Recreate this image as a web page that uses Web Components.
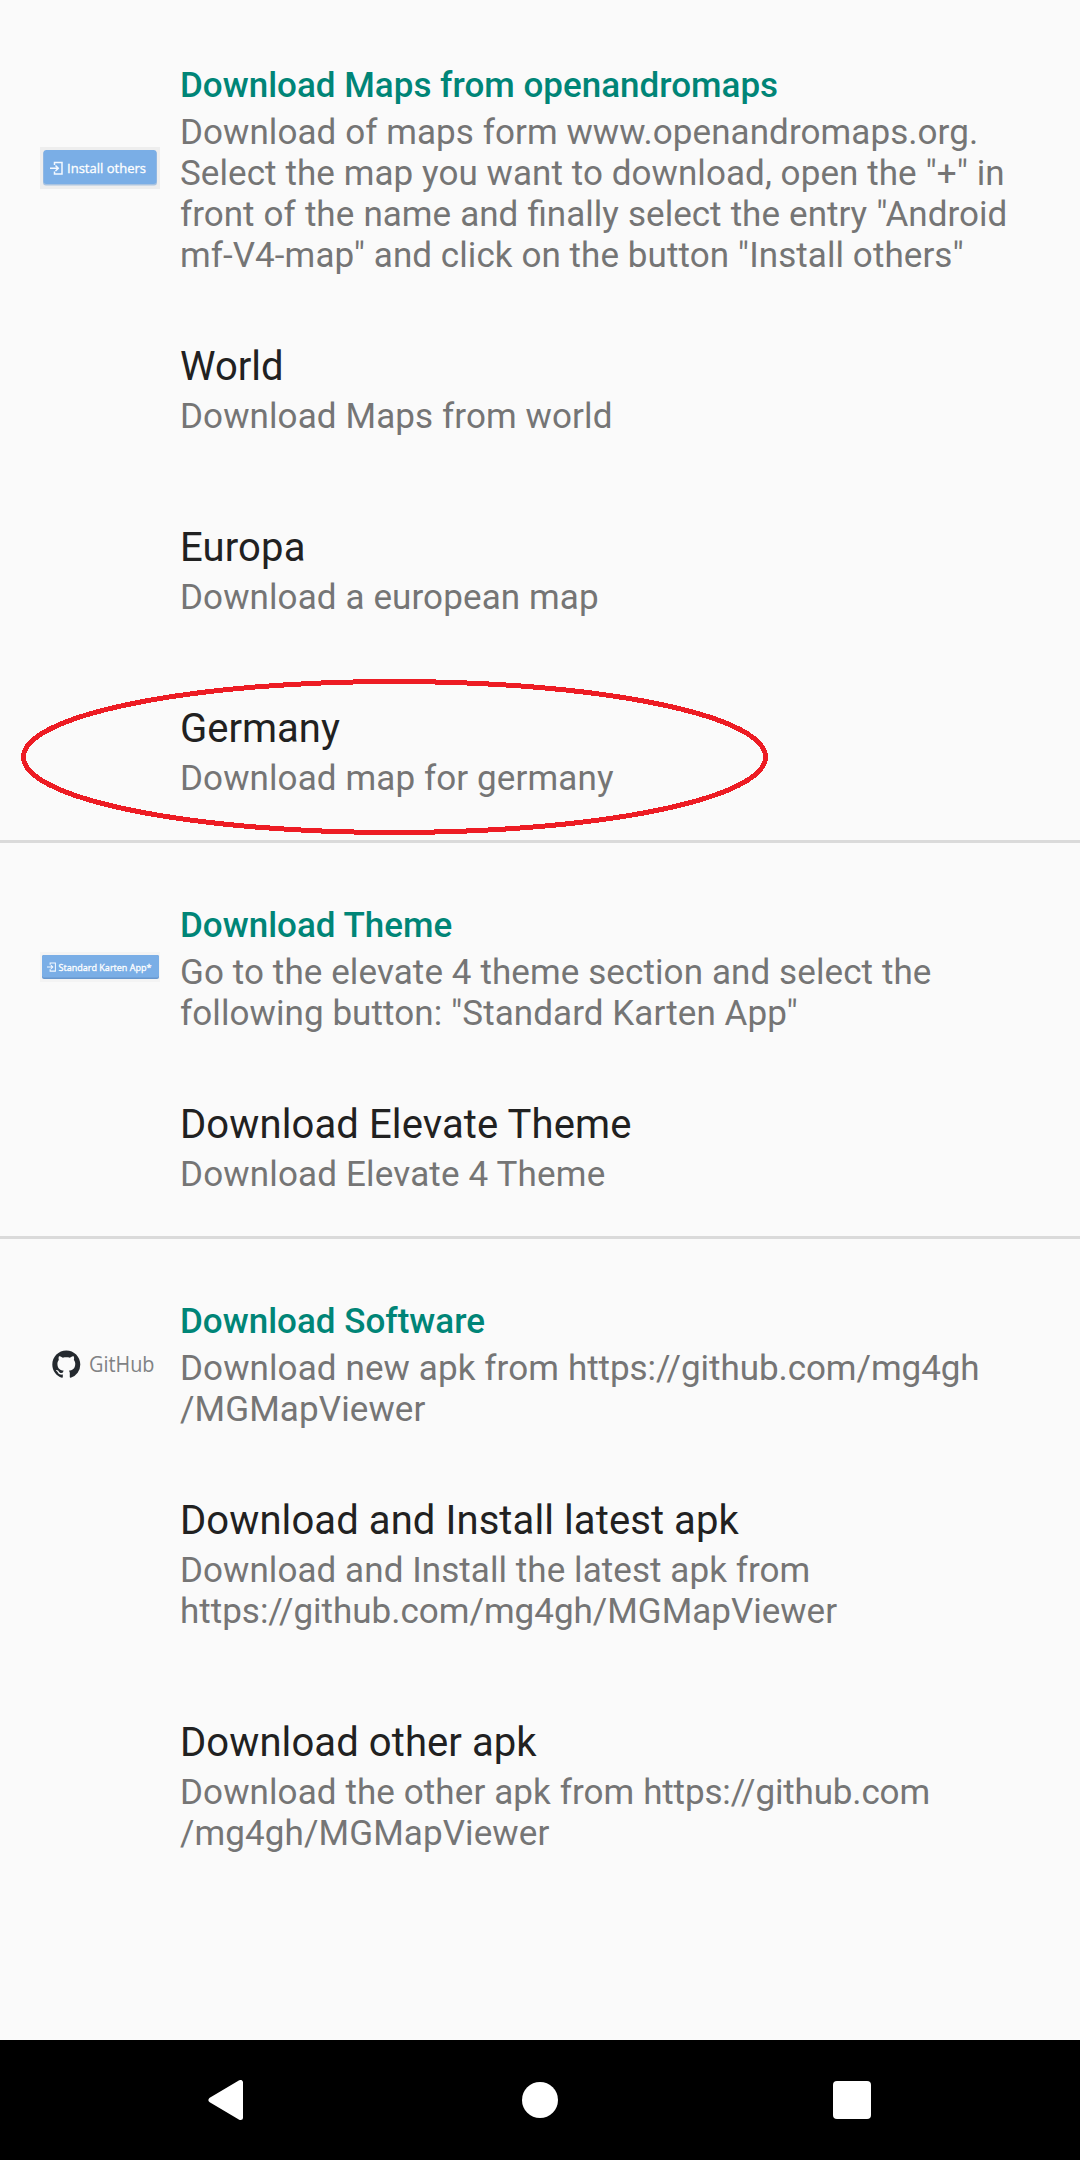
<!DOCTYPE html>
<html lang="en"><head><meta charset="utf-8"><title>Downloads</title>
<style>html,body{margin:0;background:#fafafa}body{font-family:Roboto,sans-serif}</style></head><body>
<download-screen></download-screen>
<script>
const define=(name,html)=>customElements.define(name,class extends HTMLElement{
 constructor(){super();this.attachShadow({mode:'open'}).innerHTML=html}});

define('pref-header',`<style>:host{display:flex;height:var(--h);box-sizing:border-box;padding-top:var(--top,62px)}
.icon{width:140px;flex:none;margin-left:40px;display:flex;flex-direction:column;justify-content:flex-start}
h2{margin:0;font-size:35px;line-height:41px;font-weight:500;color:#008577}
p{margin:6px 0 0;font-size:35px;line-height:41px;color:#757575;white-space:nowrap;letter-spacing:var(--ls,0)}
</style><div class="icon"><slot name="icon"></slot></div><div><h2><slot name="title"></slot></h2><p><slot></slot></p></div>`);

define('pref-item',`<style>:host{display:block;position:relative;height:var(--h,181px);box-sizing:border-box;padding:25px 0 0 180px}
h3{margin:0;font-size:40px;line-height:47px;font-weight:400;color:#212121;letter-spacing:var(--tls,0)}
p{margin:6px 0 0;font-size:35px;line-height:41px;color:#757575;white-space:nowrap;letter-spacing:var(--ls,.11px)}
</style><h3><slot name="title"></slot></h3><p><slot></slot></p><slot name="mark"></slot>`);

define('red-ring',`<style>:host{display:block;position:absolute;left:21px;top:-1px;width:747px;height:156px}svg{display:block}</style>
<svg width="747" height="156" shape-rendering="crispEdges"><ellipse cx="373.5" cy="78" rx="371" ry="75.5" fill="none" stroke="#ed1c24" stroke-width="5"/></svg>`);

define('pref-group',`<style>:host{display:block;box-sizing:border-box}:host([ruled]){border-top:3px solid #dadada}</style><slot></slot>`);

const entry='<path d="M4.500 4V1.500H12V13H4.500V10.500M0 7.250H8M5.500 4.500L8.300 7.250L5.500 10" fill="none" stroke="#f4f9ff" stroke-width="1.5"/>';
define('install-badge',`<style>:host{display:block;width:120px;height:42px;margin-top:82px;background:#eee}svg{display:block}text{font-family:"Open Sans",sans-serif}</style>
<svg width="120" height="42"><rect x="3" y="4" width="114" height="34.500" rx="3" fill="#a9c3e0"/><rect x="3.5" y="3" width="113" height="34" rx="3" fill="#7aaee6"/>
<g transform="translate(10 14)">${entry}</g><text x="27" y="25.700" font-size="13.300" fill="#fff" stroke="#fff" stroke-width=".3" textLength="79" lengthAdjust="spacingAndGlyphs">Install others</text></svg>`);
define('theme-badge',`<style>:host{display:block;width:120px;height:30px;margin-top:47px;background:#f4f4f4}svg{display:block}text{font-family:"Open Sans",sans-serif}</style>
<svg width="120" height="30"><rect x="2" y="3" width="117" height="24" rx="2" fill="#6897cd"/><rect x="2" y="3" width="117" height="22.500" rx="2" fill="#7aaee6"/>
<g transform="translate(7 10) scale(.7)">${entry}</g><text x="18.500" y="18.500" font-size="9.500" fill="#fff" stroke="#fff" stroke-width=".3" textLength="93" lengthAdjust="spacingAndGlyphs">Standard Karten App*</text></svg>`);
define('github-badge',`<style>:host{display:block;width:120px;height:44px;margin-top:39px}svg{display:block}text{font-family:"Open Sans",sans-serif}</style>
<svg width="120" height="44"><g transform="translate(12.300 10.500) scale(1.75)"><path fill="#24292e" d="M8 0C3.580 0 0 3.580 0 8c0 3.540 2.290 6.530 5.470 7.590.4.070.55-.17.55-.38 0-.19-.01-.82-.01-1.490-2.010.37-2.530-.49-2.690-.94-.09-.23-.48-.94-.82-1.130-.28-.15-.68-.52-.01-.53.63-.01 1.080.58 1.230.82.72 1.210 1.870.87 2.330.66.07-.52.28-.87.51-1.070-1.780-.2-3.640-.89-3.640-3.950 0-.87.31-1.590.82-2.150-.08-.2-.36-1.020.08-2.120 0 0 .67-.21 2.200.82.64-.18 1.320-.27 2-.27s1.360.09 2 .27c1.530-1.040 2.200-.82 2.200-.82.44 1.100.16 1.920.08 2.120.51.56.82 1.270.82 2.150 0 3.070-1.870 3.750-3.650 3.950.29.25.54.73.54 1.480 0 1.070-.01 1.930-.01 2.200 0 .21.15.46.55.38A8.010 8.010 0 0 0 16 8c0-4.420-3.580-8-8-8z"/></g>
<text x="49" y="31.600" font-size="21" fill="#808284" textLength="65.500" lengthAdjust="spacingAndGlyphs">GitHub</text></svg>`);

define('nav-bar',`<style>:host{display:flex;justify-content:space-between;align-items:center;height:120px;background:#000;box-sizing:border-box;padding:0 209px 0 208px}svg{display:block}</style>
<svg width="39" height="40"><path d="M3 20L32.500 2.500V37.500Z" fill="#fff" stroke="#fff" stroke-width="5" stroke-linejoin="round"/></svg>
<svg width="36" height="36"><circle cx="18" cy="18" r="18" fill="#fff"/></svg>
<svg width="38" height="38"><rect width="38" height="38" rx="4" fill="#fff"/></svg>`);

define('download-screen',`<style>:host{display:flex;flex-direction:column;width:1080px;height:2160px;background:#fafafa;overflow:hidden}main{flex:1}.lig{letter-spacing:0;word-spacing:.5px}</style>
<main>
<pref-group><pref-header style="--h:318px;--top:65px;--ls:.075px"><install-badge slot="icon"></install-badge><span slot="title">Download Maps from openandromaps</span>Download of maps form www.openandromaps.org.<br>Select the map you want to download, open the "+" in<br><span class="lig">front of the name and finally select the entry "Android</span><br>mf-V4-map" and click on the button "Install others"</pref-header>
<pref-item><span slot="title">World</span>Download Maps from world</pref-item>
<pref-item style="--tls:.15px"><span slot="title">Europa</span>Download a european map</pref-item>
<pref-item style="--h:160px"><span slot="title">Germany</span>Download map for germany<red-ring slot="mark"></red-ring></pref-item></pref-group>
<pref-group ruled><pref-header style="--h:233px;--ls:.08px"><theme-badge slot="icon"></theme-badge><span slot="title">Download Theme</span><span style="letter-spacing:.1px">Go to the elevate 4 theme section and select the</span><br>following button: "Standard Karten App"</pref-header>
<pref-item style="--h:160px;--tls:.11px;--ls:.17px"><span slot="title">Download Elevate Theme</span>Download Elevate 4 Theme</pref-item></pref-group>
<pref-group ruled><pref-header style="--h:233px;--ls:.11px"><github-badge slot="icon"></github-badge><span slot="title">Download Software</span>Download new apk from <span style="letter-spacing:-.05px">https://github.com/mg4gh</span><br>/MGMapViewer</pref-header>
<pref-item style="--h:222px;--tls:.09px;--ls:.07px"><span slot="title">Download and Install latest apk</span>Download and Install the latest apk from<br><span style="letter-spacing:0">https://github.com/mg4gh/MGMapViewer</span></pref-item>
<pref-item style="--tls:.09px;--ls:.1px"><span slot="title">Download other apk</span>Download the other apk from <span style="letter-spacing:-.15px">https://github.com</span><br>/mg4gh/MGMapViewer</pref-item></pref-group>
</main><nav-bar></nav-bar>`);
</script></body></html>
